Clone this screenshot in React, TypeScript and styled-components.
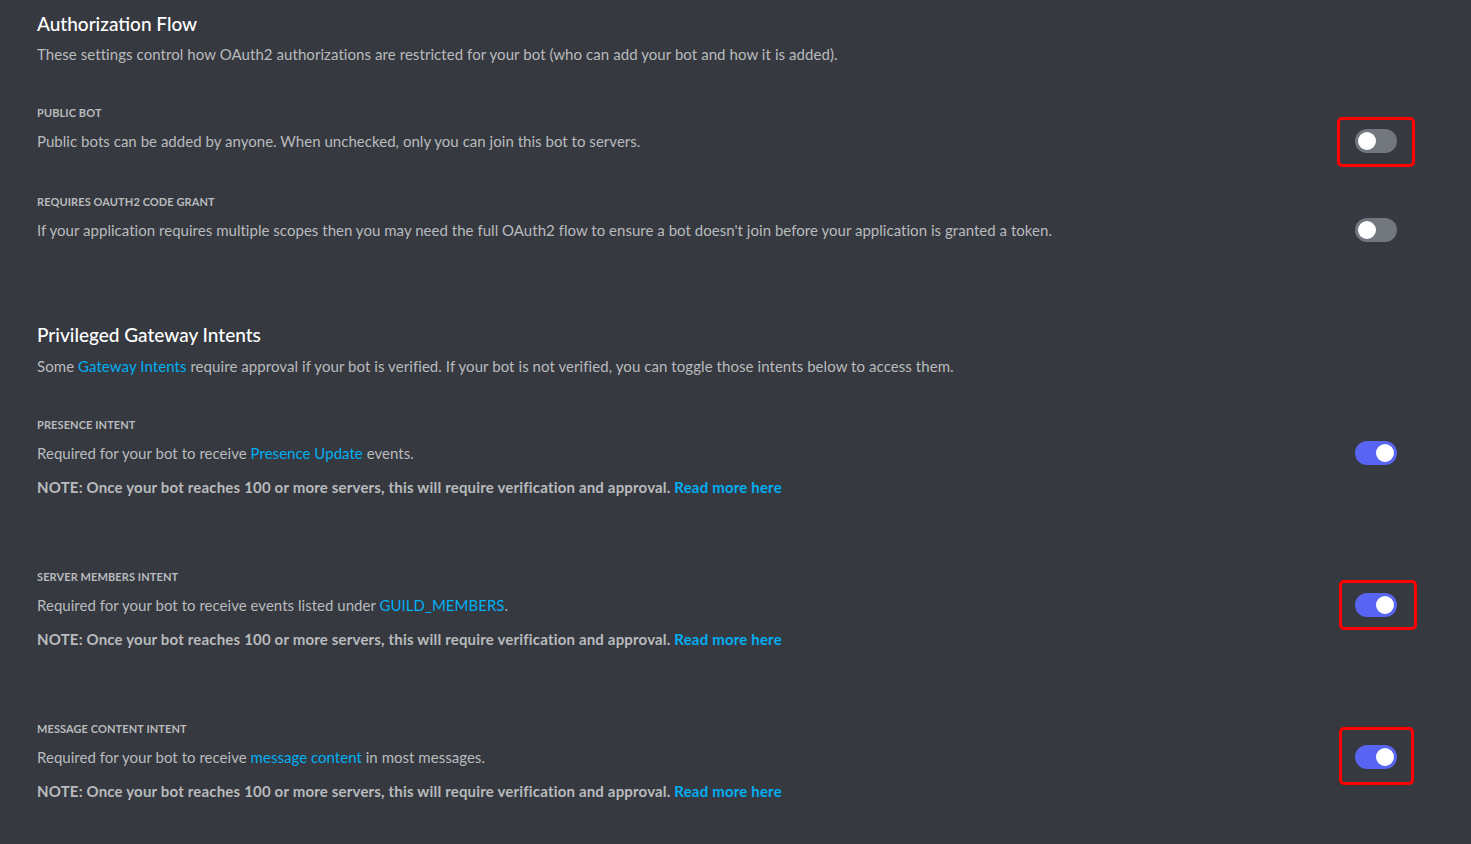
import React from "react";
import styled, { createGlobalStyle } from "styled-components";

const GlobalStyle = createGlobalStyle`
  html, body {
    margin: 0;
    padding: 0;
    background-color: #36393f;
  }
  body {
    font-family: Lato, "Noto Sans", "Liberation Sans", sans-serif;
    -webkit-font-smoothing: antialiased;
  }
`;

const Page = styled.div`
  min-height: 844px;
  box-sizing: border-box;
  padding: 12px 74px 40px 37px;
  background-color: #36393f;
  color: #b9bbbe;
`;

const Section = styled.section<{ $gap: number }>`
  margin-top: ${(p) => p.$gap}px;
`;

const Heading = styled.h2`
  margin: 0;
  font-size: 19px;
  line-height: 24px;
  font-weight: 500;
  color: #ffffff;
`;

const Description = styled.p<{ $gap?: number }>`
  margin: ${(p) => p.$gap ?? 8}px 0 0;
  font-size: 15px;
  line-height: 20px;
  letter-spacing: 0.07px;
  color: #b9bbbe;
`;

const Setting = styled.div<{ $gap: number }>`
  margin-top: ${(p) => p.$gap}px;
`;

const Label = styled.div`
  font-size: 11px;
  line-height: 16px;
  font-weight: 700;
  text-transform: uppercase;
  letter-spacing: 0.1px;
  color: #b9bbbe;
`;

const Row = styled.div`
  margin-top: 8px;
  display: flex;
  align-items: center;
  justify-content: space-between;
  min-height: 24px;
`;

const RowText = styled.span`
  font-size: 15px;
  line-height: 20px;
  letter-spacing: 0.03px;
  margin-top: -1px;
  color: #b9bbbe;
`;

const Note = styled.p`
  margin: 12px 0 0;
  font-size: 15px;
  line-height: 20px;
  font-weight: 700;
  letter-spacing: 0.18px;
  color: #b9bbbe;
`;

const Link = styled.a`
  color: #00aff4;
  text-decoration: none;
  cursor: pointer;
`;

const ToggleWrap = styled.div`
  position: relative;
  flex-shrink: 0;
`;

const Track = styled.button<{ $on: boolean }>`
  display: block;
  width: 42px;
  height: 24px;
  border: none;
  border-radius: 12px;
  padding: 0;
  position: relative;
  cursor: pointer;
  background-color: ${(p) => (p.$on ? "#5865f2" : "#72767d")};
`;

const Knob = styled.span<{ $on: boolean }>`
  position: absolute;
  top: 3px;
  left: ${(p) => (p.$on ? "21px" : "3px")};
  width: 18px;
  height: 18px;
  border-radius: 50%;
  background-color: #ffffff;
`;

type Box = { top: number; right: number; bottom: number; left: number };

const Highlight = styled.span<{ $box: Box }>`
  position: absolute;
  top: -${(p) => p.$box.top}px;
  right: -${(p) => p.$box.right}px;
  bottom: -${(p) => p.$box.bottom}px;
  left: -${(p) => p.$box.left}px;
  border: 3px solid #ff0000;
  border-radius: 5px;
  pointer-events: none;
`;

function Toggle({ on, box }: { on: boolean; box?: Box }) {
  return (
    <ToggleWrap>
      <Track $on={on} aria-pressed={on}>
        <Knob $on={on} />
      </Track>
      {box && <Highlight $box={box} />}
    </ToggleWrap>
  );
}

const NoteText = () => (
  <Note>
    NOTE: Once your bot reaches 100 or more servers, this will require verification and approval.{" "}
    <Link>Read more here</Link>
  </Note>
);

export default function App() {
  return (
    <Page>
      <GlobalStyle />
      <Section $gap={0}>
        <Heading>Authorization Flow</Heading>
        <Description>
          These settings control how OAuth2 authorizations are restricted for your bot (who can add your bot and how
          it is added).
        </Description>

        <Setting $gap={41}>
          <Label>Public Bot</Label>
          <Row>
            <RowText>Public bots can be added by anyone. When unchecked, only you can join this bot to servers.</RowText>
            <Toggle on={false} box={{ top: 12, right: 18, bottom: 14, left: 18 }} />
          </Row>
        </Setting>

        <Setting $gap={41}>
          <Label>Requires OAuth2 Code Grant</Label>
          <Row>
            <RowText>
              If your application requires multiple scopes then you may need the full OAuth2 flow to ensure a bot
              doesn't join before your application is granted a token.
            </RowText>
            <Toggle on={false} />
          </Row>
        </Setting>
      </Section>

      <Section $gap={81}>
        <Heading>Privileged Gateway Intents</Heading>
        <Description $gap={9}>
          Some <Link>Gateway Intents</Link> require approval if your bot is verified. If your bot is not verified, you
          can toggle those intents below to access them.
        </Description>

        <Setting $gap={41}>
          <Label>Presence Intent</Label>
          <Row>
            <RowText>
              Required for your bot to receive <Link>Presence Update</Link> events.
            </RowText>
            <Toggle on />
          </Row>
          <NoteText />
        </Setting>

        <Setting $gap={72}>
          <Label>Server Members Intent</Label>
          <Row>
            <RowText>
              Required for your bot to receive events listed under <Link>GUILD_MEMBERS</Link>.
            </RowText>
            <Toggle on box={{ top: 13, right: 20, bottom: 13, left: 16 }} />
          </Row>
          <NoteText />
        </Setting>

        <Setting $gap={72}>
          <Label>Message Content Intent</Label>
          <Row>
            <RowText>
              Required for your bot to receive <Link>message content</Link> in most messages.
            </RowText>
            <Toggle on box={{ top: 18, right: 17, bottom: 16, left: 16 }} />
          </Row>
          <NoteText />
        </Setting>
      </Section>
    </Page>
  );
}
